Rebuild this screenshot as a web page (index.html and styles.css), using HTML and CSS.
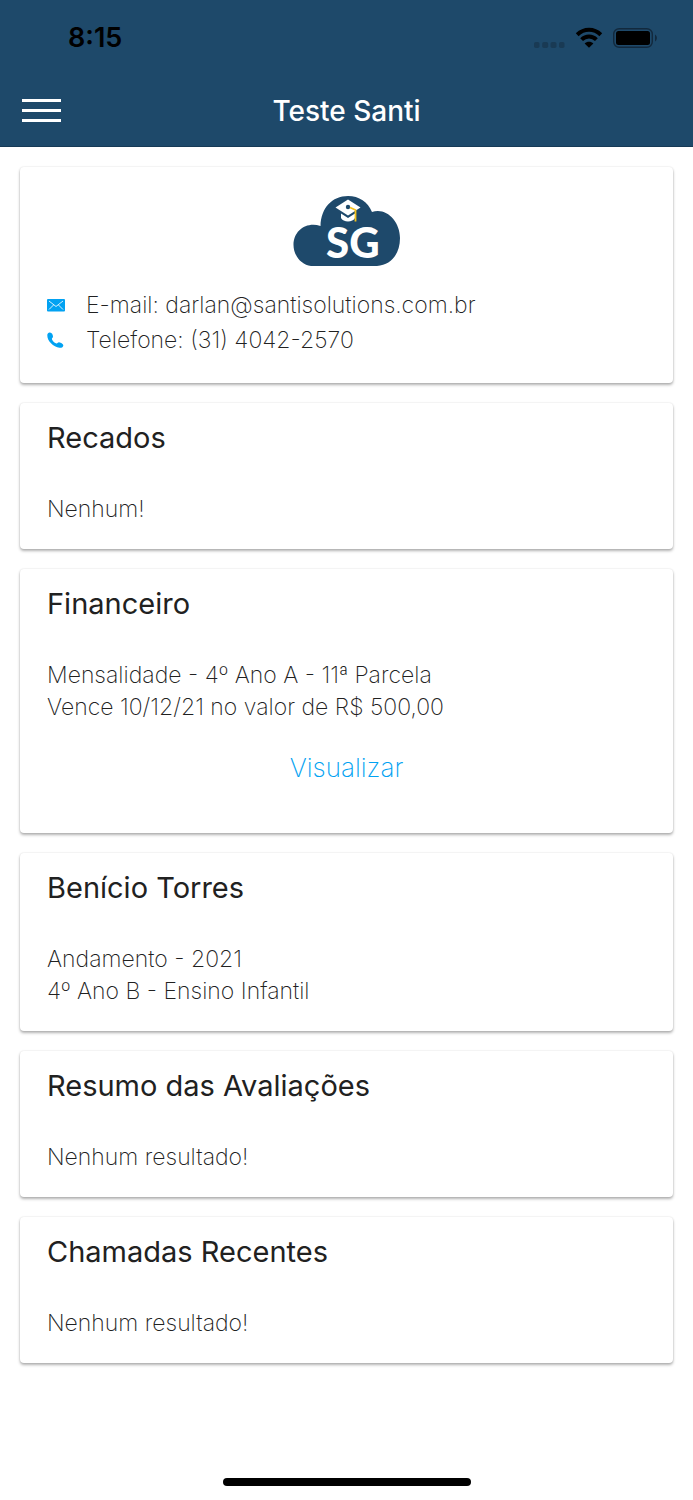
FILE: index.html
```html
<!DOCTYPE html>
<html lang="pt-BR">
<head>
<meta charset="utf-8">
<meta name="viewport" content="width=device-width, initial-scale=1">
<title>Teste Santi</title>
<link rel="stylesheet" href="styles.css">
</head>
<body>
<header class="header">
  <div class="status">
    <time class="clock">8:15</time>
    <div class="indicators">
      <svg class="signal" width="32" height="22" viewBox="0 0 32 22" aria-hidden="true"><g fill="#193a54"><rect x="1" y="15" width="5.500" height="6" rx="1.800"/><rect x="9.200" y="15" width="6" height="6" rx="1.800"/><rect x="17.500" y="15" width="6" height="6" rx="1.800"/><rect x="26" y="15" width="5.500" height="6" rx="1.800"/></g></svg>
      <svg class="wifi" width="28" height="22" viewBox="0 0 28 22" aria-hidden="true"><g fill="none" stroke="#000" stroke-width="4"><path d="M2.200 7.800C9 1.200 19 1.200 25.800 7.800"/><path d="M6.600 12.600C10.800 8.500 17.200 8.500 21.400 12.600"/></g><path d="M14 20.800L9.600 16.500C12 14.300 16 14.300 18.400 16.500Z"/></svg>
      <svg class="battery" width="44" height="22" viewBox="0 0 44 22" aria-hidden="true"><rect x="0.700" y="1.700" width="38.600" height="18.600" rx="5.500" fill="none" stroke="#12293d" stroke-width="1.400"/><rect x="3" y="4" width="34" height="14" rx="2.500"/><path d="M42 7.500C44.500 9 44.500 13 42 14.500Z" fill="#12293d"/></svg>
    </div>
  </div>
  <div class="toolbar">
    <button class="menu" type="button" aria-label="Menu"><span class="bar"></span><span class="bar"></span><span class="bar"></span></button>
    <h1 class="title">Teste Santi</h1>
  </div>
</header>
<main class="cards">
  <section class="card contact">
    <svg class="logo" width="108" height="72" viewBox="0 0 108 72" role="img" aria-label="SG">
      <path fill="#1e496b" d="M18 71C8 70 0.500 60 0.500 50C0.500 36 13 26.500 27.500 31C28 13 39 1 55 1C66 1 75 7 79 17C93 12 107 26 107 43C107 59 98 70 84 71Z"/>
      <path fill="#fff" d="M55 4.500L67.500 12.500L55 20.500L42.500 12.500ZM48 18.500L55 23L62 18.500V23C60 27.500 50 27.500 48 23Z"/>
      <circle cx="55" cy="12" r="2.200" fill="#1e496b"/>
      <path d="M57 12.500L62.500 15V26.500" fill="none" stroke="#f5c21b" stroke-width="1.800"/>
      <text class="logo-text" x="33" y="63">SG</text>
    </svg>
    <ul class="contact-list">
      <li class="contact-row"><svg class="icon" width="18" height="20" viewBox="0 0 18 20" aria-hidden="true"><rect y="3" width="18" height="12.500" rx="1" fill="#02a2f2"/><path d="M2 5L9 10.500L16 5M2 13.500L6.500 9M16 13.500L11.500 9" fill="none" stroke="#d5f0ff" stroke-width="1"/></svg><span>E-mail: darlan@santisolutions.com.br</span></li>
      <li class="contact-row"><svg class="icon" width="18" height="20" viewBox="0 0 18 20" aria-hidden="true"><path fill="#02a2f2" d="M2.500 1.500C4.500 1 6 3.500 6 5.500C6 7 4.500 7 5 8.500C6 10.500 8 12.200 9.500 12.500C10.500 12.700 11 11.200 12 11.300C14 11.500 16.500 13.300 16.300 14.700C15.800 16.500 14 17 12.500 16.800C6.500 15.800 0 10 0.300 4C0.400 2.500 1.500 1.700 2.500 1.500Z"/></svg><span>Telefone: (31) 4042-2570</span></li>
    </ul>
  </section>
  <section class="card">
    <h2 class="card-title">Recados</h2>
    <p class="text">Nenhum!</p>
  </section>
  <section class="card">
    <h2 class="card-title">Financeiro</h2>
    <p class="text">Mensalidade - 4º Ano A - 11ª Parcela</p>
    <p class="text">Vence 10/12/21 no valor de R$ 500,00</p>
    <button class="action" type="button">Visualizar</button>
  </section>
  <section class="card">
    <h2 class="card-title">Benício Torres</h2>
    <p class="text">Andamento - 2021</p>
    <p class="text">4º Ano B - Ensino Infantil</p>
  </section>
  <section class="card">
    <h2 class="card-title">Resumo das Avaliações</h2>
    <p class="text">Nenhum resultado!</p>
  </section>
  <section class="card">
    <h2 class="card-title">Chamadas Recentes</h2>
    <p class="text">Nenhum resultado!</p>
  </section>
</main>
<footer class="footer"><div class="home-indicator"></div></footer>
</body>
</html>
```
FILE: styles.css
```css
* { box-sizing: border-box; }
body {
  margin: 0;
  min-height: 100vh;
  display: flex;
  flex-direction: column;
  background: #fff;
  color: #212121;
  font-family: Inter, "Liberation Sans", sans-serif;
}
h1, h2, p, ul { margin: 0; padding: 0; }
button { border: 0; background: none; padding: 0; font: inherit; }
.header {
  background: #1e496a;
  border-bottom: 1px solid #173a56;
}
.status {
  height: 75px;
  padding: 0 36px 0 68px;
  display: flex;
  justify-content: space-between;
  align-items: center;
}
.clock {
  color: #000;
  font-size: 27px;
  font-weight: 600;
}
.indicators { display: flex; align-items: center; gap: 10px; }
.toolbar {
  height: 71px;
  padding: 0 22px;
  display: grid;
  grid-template-columns: 40px 1fr 40px;
  align-items: center;
}
.menu { display: grid; gap: 7px; width: 39px; }
.bar { height: 3px; background: #fff; }
.title {
  color: #fff;
  font-size: 28px;
  font-weight: 500;
  line-height: 32px;
  text-align: center;
}
.cards {
  flex: 1;
  padding: 20px;
  display: flex;
  flex-direction: column;
  gap: 20px;
}
.card {
  padding: 16px 27px 24px;
  border-radius: 4px;
  box-shadow: 0 2px 3px rgba(0, 0, 0, 0.3), 0 0 2px rgba(0, 0, 0, 0.12);
}
.card-title {
  margin-bottom: 36px;
  font-size: 29px;
  font-weight: 400;
  line-height: 38px;
}
.text {
  font-size: 23px;
  font-weight: 200;
  line-height: 32px;
}
.contact { padding: 28px 27px 25px; }
.logo { display: block; margin: 0 auto 21px; }
.logo-text {
  fill: #fff;
  font-family: Lato, sans-serif;
  font-size: 42px;
  font-weight: 900;
}
.contact-list { list-style: none; }
.contact-row {
  display: flex;
  align-items: center;
  gap: 21px;
  font-size: 23px;
  font-weight: 200;
  line-height: 35px;
}
.action {
  display: block;
  margin: 21px auto 17px;
  color: #02a2f2;
  font-size: 26px;
  font-weight: 200;
  line-height: 48px;
  cursor: pointer;
}
.footer { padding: 0 20px 14px; }
.home-indicator {
  width: 248px;
  height: 8px;
  margin: 0 auto;
  border-radius: 4px;
  background: #000;
}
```
